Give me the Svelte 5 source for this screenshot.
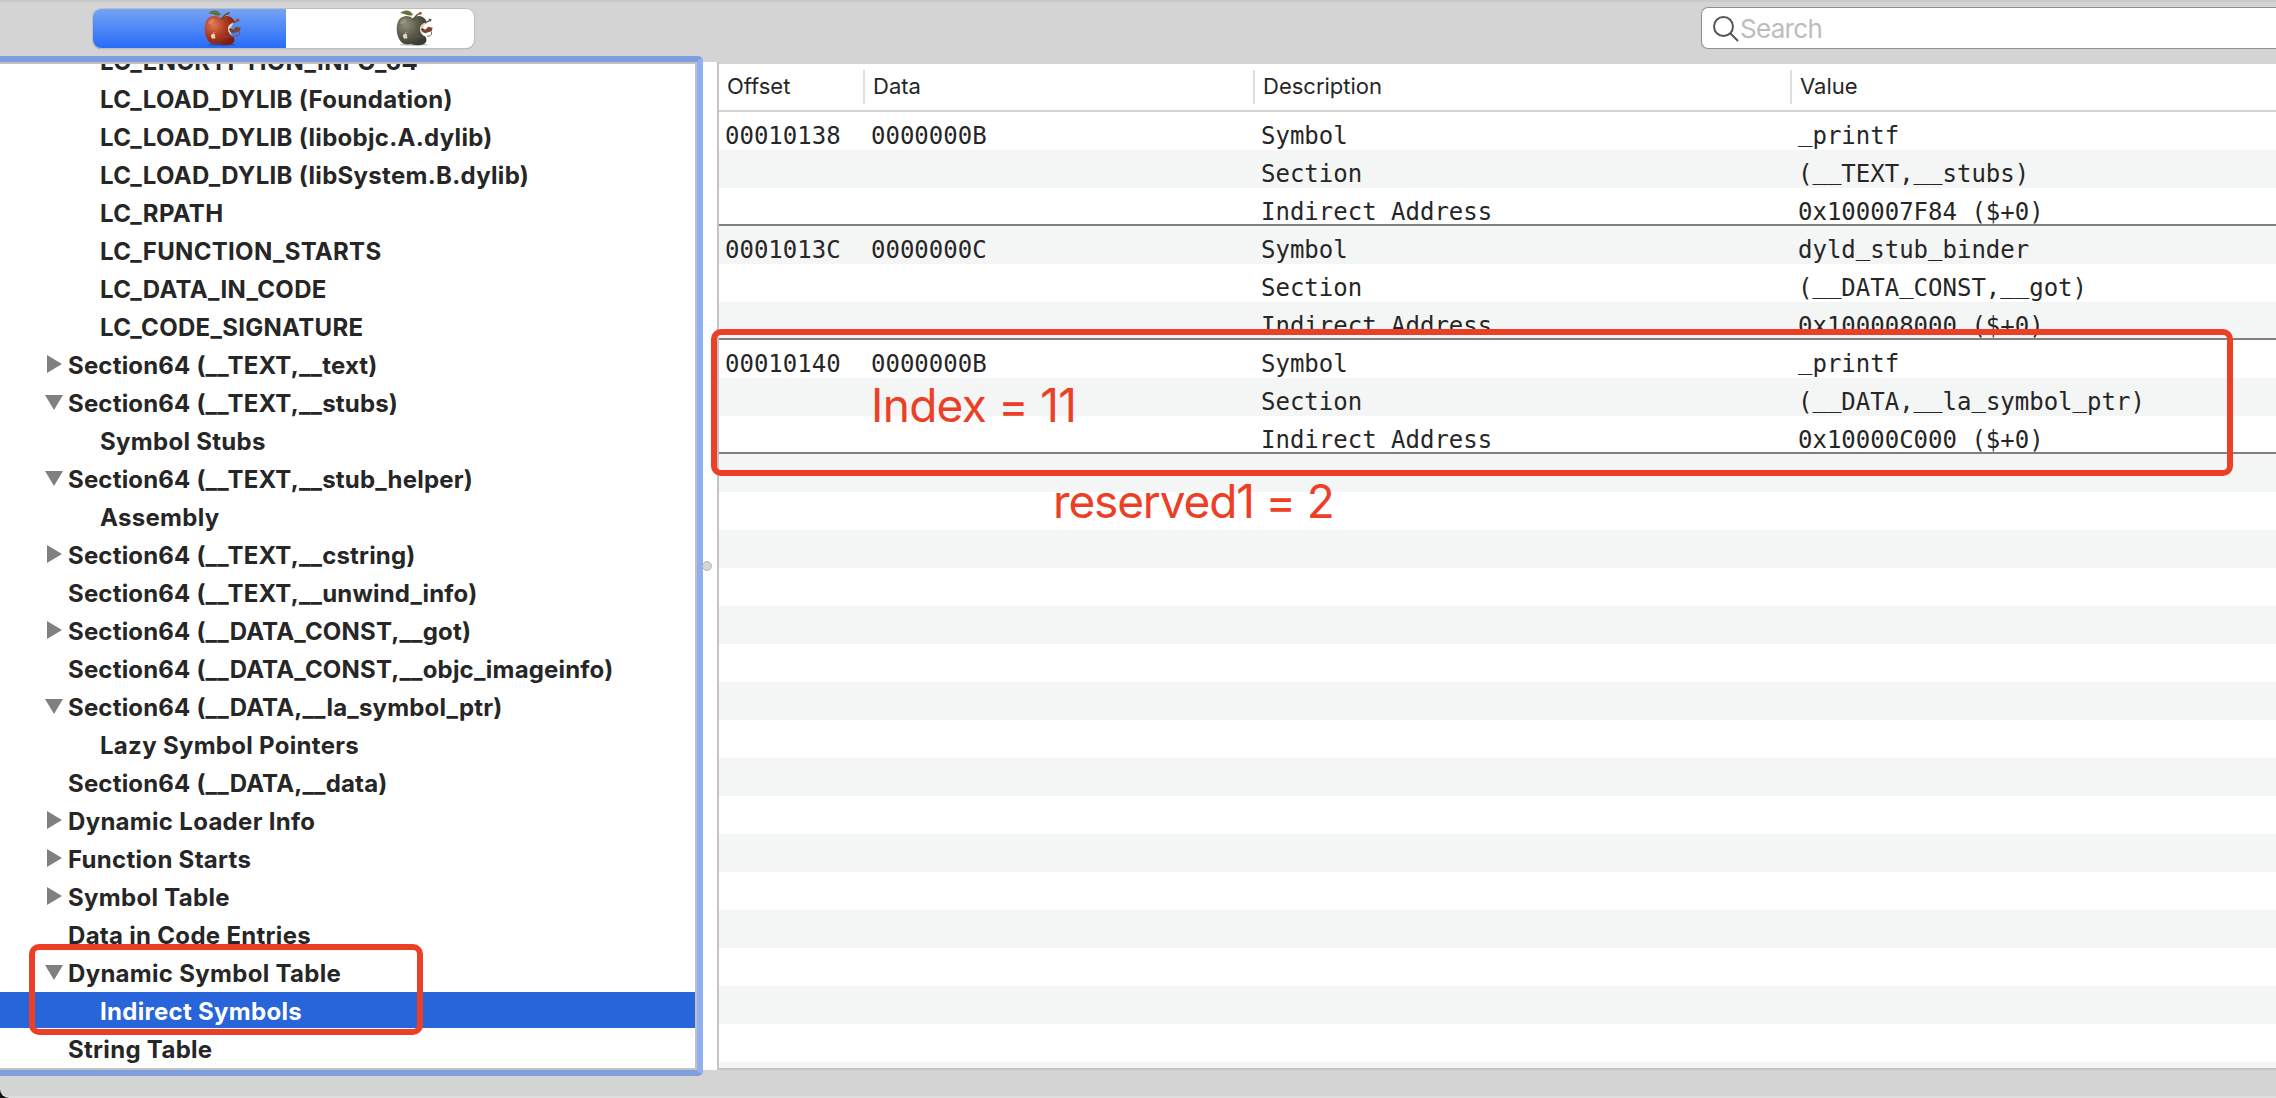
<script lang="ts">
  type TreeItem = { label: string; child?: boolean; arrow?: 'open' | 'closed'; selected?: boolean };

  const tree: TreeItem[] = [
    { label: 'LC_ENCRYPTION_INFO_64', child: true },
    { label: 'LC_LOAD_DYLIB (Foundation)', child: true },
    { label: 'LC_LOAD_DYLIB (libobjc.A.dylib)', child: true },
    { label: 'LC_LOAD_DYLIB (libSystem.B.dylib)', child: true },
    { label: 'LC_RPATH', child: true },
    { label: 'LC_FUNCTION_STARTS', child: true },
    { label: 'LC_DATA_IN_CODE', child: true },
    { label: 'LC_CODE_SIGNATURE', child: true },
    { label: 'Section64 (__TEXT,__text)', arrow: 'closed' },
    { label: 'Section64 (__TEXT,__stubs)', arrow: 'open' },
    { label: 'Symbol Stubs', child: true },
    { label: 'Section64 (__TEXT,__stub_helper)', arrow: 'open' },
    { label: 'Assembly', child: true },
    { label: 'Section64 (__TEXT,__cstring)', arrow: 'closed' },
    { label: 'Section64 (__TEXT,__unwind_info)' },
    { label: 'Section64 (__DATA_CONST,__got)', arrow: 'closed' },
    { label: 'Section64 (__DATA_CONST,__objc_imageinfo)' },
    { label: 'Section64 (__DATA,__la_symbol_ptr)', arrow: 'open' },
    { label: 'Lazy Symbol Pointers', child: true },
    { label: 'Section64 (__DATA,__data)' },
    { label: 'Dynamic Loader Info', arrow: 'closed' },
    { label: 'Function Starts', arrow: 'closed' },
    { label: 'Symbol Table', arrow: 'closed' },
    { label: 'Data in Code Entries' },
    { label: 'Dynamic Symbol Table', arrow: 'open' },
    { label: 'Indirect Symbols', child: true, selected: true },
    { label: 'String Table' }
  ];

  const columns = ['Offset', 'Data', 'Description', 'Value'];

  const entries = [
    ['00010138', '0000000B', 'Symbol', '_printf'],
    ['', '', 'Section', '(__TEXT,__stubs)'],
    ['', '', 'Indirect Address', '0x100007F84 ($+0)'],
    ['0001013C', '0000000C', 'Symbol', 'dyld_stub_binder'],
    ['', '', 'Section', '(__DATA_CONST,__got)'],
    ['', '', 'Indirect Address', '0x100008000 ($+0)'],
    ['00010140', '0000000B', 'Symbol', '_printf'],
    ['', '', 'Section', '(__DATA,__la_symbol_ptr)'],
    ['', '', 'Indirect Address', '0x10000C000 ($+0)']
  ];
  const rows = [...entries, ...Array.from({ length: 17 }, () => ['', '', '', ''])];

  // Underscore runs are separated so they can sit just under the baseline.
  const parts = (text: string) => text.split(/(_+)/).filter(Boolean);
</script>

{#snippet apple(id: string, light: string, mid: string, dark: string)}
  <svg class="apple" viewBox="0 0 120 120" aria-hidden="true">
    <defs>
      <radialGradient {id} cx="0.3" cy="0.3" r="0.75">
        <stop offset="0" stop-color={light} />
        <stop offset="0.5" stop-color={mid} />
        <stop offset="1" stop-color={dark} />
      </radialGradient>
    </defs>
    <ellipse cx="56" cy="107" rx="42" ry="3" fill="#000" opacity="0.3" />
    <path
      d="M53 28C42 18 22 19 12 32C2 47 3 74 14 93C22 107 35 108 47 104C57 109 80 111 90 103C97 96 95 86 89 81C80 79 74 69 76 58C78 49 88 44 95 37C85 19 66 17 53 28Z"
      fill="url(#{id})"
    />
    <path d="M94 39C82 43 74 50 75 61C76 71 81 77 87 80L82 69L85 54Z" fill="#e3d2b4" />
    <path d="M79 60C84 54 86 64 93 61L99 53L113 56L110 67L100 70L91 73L83 69Z" fill="#7a4530" />
    <path d="M78 61L85 59L83 67Z" fill="#4b2b20" />
    <path d="M62 84C72 79 78 91 90 82M109 68C112 78 103 84 96 81" fill="none" stroke={mid} stroke-width="3" />
    <circle cx="80" cy="95" r="11" fill={dark} opacity="0.4" />
    <path d="M55 34C58 27 63 17 74 14M90 43C97 38 101 36 105 34" fill="none" stroke="#674322" stroke-width="3.5" />
    <circle cx="76" cy="13" r="4" fill="#795323" />
    <circle cx="105" cy="33" r="4.5" fill={mid} />
    <path d="M16 12C27 0 46 2 54 17C43 24 34 15 16 12Z" fill="#5c682b" />
    <path d="M18 12C30 7 43 10 53 17" fill="none" stroke="#8b8c40" stroke-width="2" />
    <path d="M31 75C26 74 23 77 24 82C25 88 28 91 31 88C34 91 37 87 38 84C34 82 35 78 37 77C35 74 33 75 31 75Z" fill="#ead7b6" />
    <path d="M31 74L34 69" stroke="#ead7b6" stroke-width="2.5" />
    <ellipse cx="25" cy="37" rx="11" ry="6" transform="rotate(-35 25 37)" fill="#fff" opacity="0.18" />
  </svg>
{/snippet}

<div class="window">
  <header class="toolbar">
    <div class="segmented">
      <div class="segment active">{@render apple('red-apple', '#e07a50', '#b23c24', '#782013')}</div>
      <div class="segment">{@render apple('grey-apple', '#8f8f79', '#5e5f4e', '#393b30')}</div>
    </div>
    <div class="search">
      <svg class="lens" viewBox="0 0 28 28" aria-hidden="true">
        <circle cx="11.5" cy="11.5" r="9.5" />
        <path d="M18.5 18.5L26 26" />
      </svg>
      <span>Search</span>
    </div>
  </header>

  <main class="panes">
    <nav class="sidebar">
      <div class="tree">
        {#each tree as item}
          <div class="item" class:child={item.child} class:selected={item.selected}>
            <span class="disclosure">
              {#if item.arrow === 'closed'}
                <svg class="closed" viewBox="0 0 15 18"><path d="M0 0L15 9L0 18Z" /></svg>
              {:else if item.arrow === 'open'}
                <svg class="open" viewBox="0 0 18 15"><path d="M0 0H18L9 15Z" /></svg>
              {/if}
            </span>
            <span class="label" class:section={item.label.startsWith('Section64')}>{item.label}</span>
          </div>
        {/each}
      </div>
    </nav>

    <div class="splitter"><i></i></div>

    <section class="table">
      <div class="grid head">
        {#each columns as column}
          <div class="th">{column}</div>
        {/each}
      </div>
      <div class="body">
        {#each rows as row, i}
          <div class="grid row" class:group-end={i < entries.length && i % 3 === 2}>
            {#each row as cell}
              <div class="td">{#each parts(cell) as part}<span class:underscore={part[0] === '_'}>{part}</span>{/each}</div>
            {/each}
          </div>
        {/each}
      </div>
    </section>
  </main>

  <footer class="statusbar"></footer>

  <div class="box box-entry"></div>
  <div class="box box-tree"></div>
  <div class="note note-index">Index = 11</div>
  <div class="note note-reserved">reserved1 = 2</div>
</div>

<style>
  :global(body) {
    margin: 0;
    background: #111;
    overflow: hidden;
  }

  .window {
    position: relative;
    box-sizing: border-box;
    width: 2276px;
    height: 1098px;
    display: flex;
    flex-direction: column;
    overflow: hidden;
    background: #d4d4d4;
    border-top: 2px solid #c8c8c8;
    border-bottom: 2px solid #dedede;
    border-bottom-left-radius: 9px;
    font-family: Inter, 'Liberation Sans', sans-serif;
    color: #262626;
  }

  .toolbar {
    flex: none;
    height: 54px;
    display: flex;
    justify-content: space-between;
    align-items: flex-start;
    padding-left: 93px;
  }

  .segmented {
    display: flex;
    width: 381px;
    height: 39px;
    margin-top: 7px;
    border-radius: 8px;
    overflow: hidden;
    background: #fff;
    box-shadow: 0 0 0 1px #bdbdbd, 0 1px 1px #888;
  }

  .segment {
    display: flex;
    align-items: center;
    box-sizing: border-box;
    width: 188px;
    padding-left: 109px;
  }

  .segment.active {
    width: 193px;
    padding-left: 110px;
    background: linear-gradient(#75a3f5, #276cf8);
  }

  .apple {
    width: 40px;
    height: 40px;
  }

  .search {
    box-sizing: border-box;
    display: flex;
    align-items: center;
    width: 575px;
    height: 42px;
    margin-top: 5px;
    padding-left: 10px;
    border: 1px solid #8e8e8e;
    border-right: 0;
    border-radius: 7px 0 0 7px;
    background: #fff;
    color: #bdbdbd;
    font-size: 26px;
    line-height: 38px;
    letter-spacing: -0.7px;
  }

  .search span {
    padding-top: 2px;
  }

  .lens {
    width: 28px;
    height: 28px;
    margin-top: 1px;
    fill: none;
    stroke: #555;
    stroke-width: 2;
  }

  .panes {
    flex: none;
    display: flex;
    height: 1020px;
  }

  .sidebar {
    box-sizing: border-box;
    width: 703px;
    border: 6px solid #8eaff0;
    border-top-color: #7f9ee0;
    border-bottom-color: #7f9ee0;
    border-left: 0;
    border-radius: 0 5px 5px 0;
  }

  .tree {
    box-sizing: border-box;
    height: 1008px;
    display: flex;
    flex-direction: column;
    justify-content: flex-end;
    border: 2px solid #c2c2c4;
    border-left: 0;
    overflow: hidden;
    background: #fff;
  }

  .item {
    flex: none;
    box-sizing: border-box;
    height: 38px;
    display: flex;
    align-items: center;
    padding-left: 45px;
    border-bottom: 2px solid #fff;
    font-size: 24px;
    font-weight: 700;
    line-height: 33px;
    white-space: nowrap;
  }

  .item.child {
    padding-left: 77px;
  }

  .item.selected {
    background: #2865da;
    background-clip: padding-box;
    color: #fff;
  }

  .disclosure {
    width: 23px;
    display: flex;
    align-items: center;
  }

  .disclosure svg {
    fill: #808080;
  }

  .closed {
    width: 15px;
    height: 18px;
    margin-left: 2px;
  }

  .open {
    width: 18px;
    height: 15px;
  }

  .label {
    padding-top: 3px;
    letter-spacing: 0.3px;
  }

  .label.section {
    letter-spacing: 0.18px;
  }

  .splitter {
    box-sizing: border-box;
    width: 16px;
    height: 1008px;
    margin-top: 6px;
    display: flex;
    align-items: center;
    background: #fff;
    border-right: 2px solid #c4c4c4;
  }

  .splitter i {
    box-sizing: border-box;
    width: 10px;
    height: 10px;
    margin-left: -1px;
    border: 1px solid #b8b8b8;
    border-radius: 50%;
    background: #d6d6d6;
  }

  .table {
    box-sizing: border-box;
    flex: 1;
    height: 1006px;
    margin-top: 8px;
    overflow: hidden;
    border-bottom: 2px solid #c4c4c4;
    background: #fff;
  }

  .grid {
    display: grid;
    grid-template-columns: 146px 390px 537px 1fr;
  }

  .head {
    box-sizing: border-box;
    height: 48px;
    padding: 6px 0;
    border-bottom: 2px solid #d2d2d2;
  }

  .th {
    box-sizing: border-box;
    height: 34px;
    padding-left: 8px;
    border-right: 2px solid #dfdfdf;
    font-size: 22px;
    line-height: 32px;
  }

  .th:last-child {
    border-right: 0;
  }

  .row {
    box-sizing: border-box;
    height: 38px;
  }

  .row:nth-child(even) {
    background: #f4f5f5;
  }

  .group-end {
    border-bottom: 2px solid #808080;
  }

  .td {
    box-sizing: border-box;
    height: 36px;
    padding: 2px 0 0 6px;
    font-family: 'DejaVu Sans Mono', 'Liberation Mono', monospace;
    font-size: 24px;
    line-height: 44px;
    white-space: pre;
  }

  .underscore {
    line-height: 0;
    vertical-align: 3px;
  }

  .statusbar {
    flex: 1;
  }

  .box {
    position: absolute;
    box-sizing: border-box;
    border: 6px solid #ec4026;
    border-radius: 10px;
  }

  .box-entry {
    left: 711px;
    top: 327px;
    width: 1522px;
    height: 147px;
  }

  .box-tree {
    left: 29px;
    top: 942px;
    width: 394px;
    height: 91px;
  }

  .note {
    position: absolute;
    color: #ec4026;
    font-size: 46px;
    line-height: 56px;
    white-space: nowrap;
  }

  .note-index {
    left: 871px;
    top: 375px;
    letter-spacing: -0.7px;
  }

  .note-reserved {
    left: 1053px;
    top: 471px;
    letter-spacing: -1.15px;
  }
</style>
